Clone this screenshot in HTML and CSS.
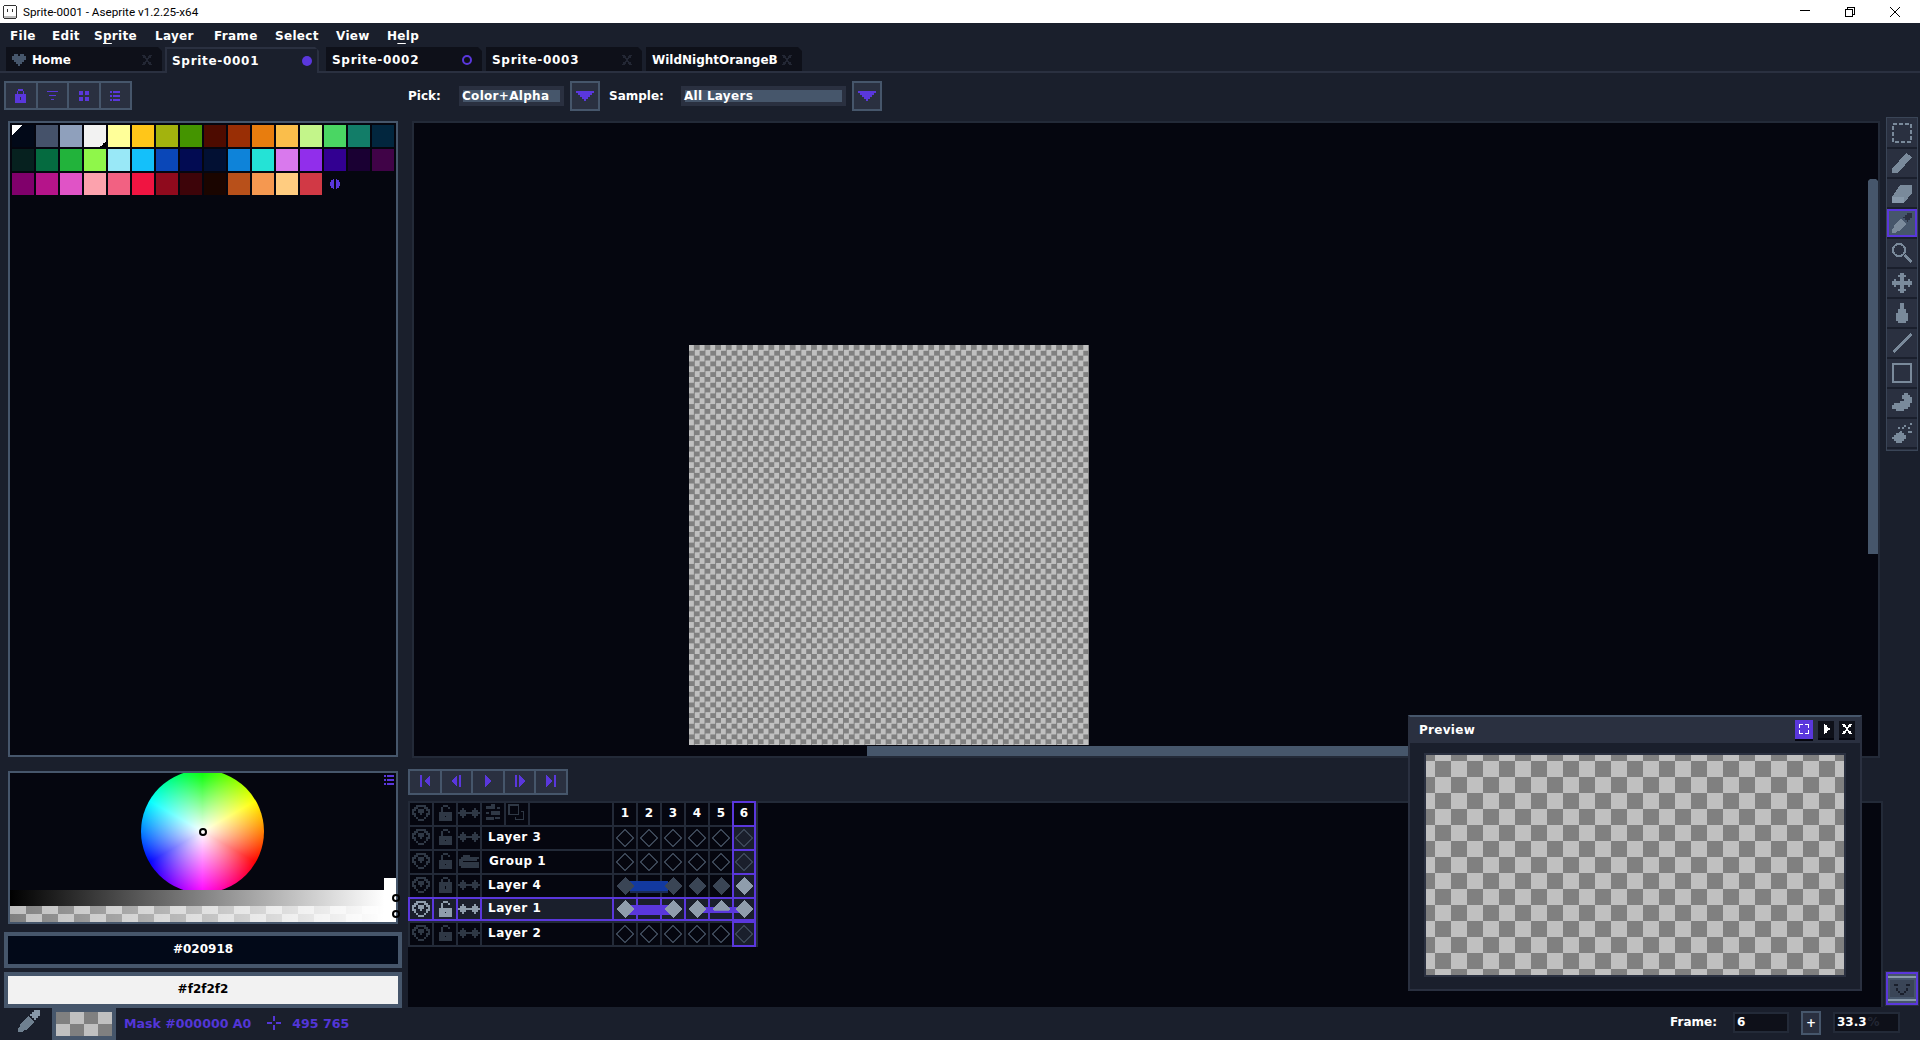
FILE: index.html
```html
<!DOCTYPE html>
<html lang="en">
<head>
    <meta charset="UTF-8">
    <title>Sprite-0001 - Aseprite v1.2.25-x64</title>
    <link rel="stylesheet" href="styles.css">
</head>
<body>
    <svg class="sprites">
        <symbol id="eye" viewBox="0 0 9 8"><path d="M2 0h5v1h-5z M1 1h2v1h-2z M6 1h2v1h-2z M0 2h2v1h-2z M3 2h3v1h-3z M7 2h2v1h-2z M0 3h1v1h-1z M3 3h3v1h-3z M8 3h1v1h-1z M0 4h2v1h-2z M4 4h1v1h-1z M7 4h2v1h-2z M1 5h1v1h-1z M7 5h1v1h-1z M2 6h1v1h-1z M6 6h1v1h-1z M3 7h3v1h-3z"/></symbol>
        <symbol id="lock" viewBox="0 0 7 9"><path fill-rule="evenodd" d="M2 0h3v1h1v2h1v6h-7v-6h1v-2h1z M2 1v2h3v-2z M3 5v2h1v-2z"/></symbol>
        <symbol id="unlock" viewBox="0 0 7 9"><path fill-rule="evenodd" d="M0 4h7v5h-7z M3 6v1h1v-1z M1 1h1v-1h3v1h1v1h-1v-1h-3v3h-1z"/></symbol>
        <symbol id="cont" viewBox="0 0 11 5"><path d="M2 0h1v1h1v1h3v-1h1v-1h1v1h1v1h1v1h-1v1h-1v1h-1v-1h-1v-1h-3v1h-1v1h-1v-1h-1v-1h-1v-1h1v-1h1z"/></symbol>
        <symbol id="dia-o" viewBox="0 0 9 9"><polygon points="4.5,.3 8.7,4.5 4.5,8.7 .3,4.5" fill="none" stroke="currentColor" stroke-width=".6"/></symbol>
        <symbol id="dia-f" viewBox="0 0 9 9"><polygon points="4.5,0 9,4.5 4.5,9 0,4.5"/></symbol>
        <symbol id="sliders" viewBox="0 0 11 11"><path d="M1 1h6v2h-6z M4 0h3v1h-3z M8 2h2v1h-2z M1 5h2v1h-2z M4 4h6v3h-6z M1 8h5v2h-5z M7 8h3v1h-3z"/></symbol>
        <symbol id="copies" viewBox="0 0 11 11"><path fill-rule="evenodd" d="M0 0h7v7h-7z M1 1v5h5v-5z M8 4h2v6h-6v-2h1v1h4v-4h-1z"/></symbol>
        <symbol id="folder" viewBox="0 0 11 8"><path d="M1 2h1v-1h4v1h5v1h-1v1h-8v4h-1v-1h-1v-4h1z M2 5h9v3h-9z"/></symbol>
        <symbol id="close" viewBox="0 0 7 7"><path d="M0 0h2v1h1v1h1v-1h1v-1h2v1h-1v1h-1v1h-1v1h1v1h1v1h1v1h-2v-1h-1v-1h-1v1h-1v1h-2v-1h1v-1h1v-1h1v-1h-1v-1h-1v-1h-1z"/></symbol>
        <symbol id="list" viewBox="0 0 10 10"><path d="M0 0h2v2h-2z M3 0h7v2h-7z M0 4h2v2h-2z M3 4h7v2h-7z M0 8h2v2h-2z M3 8h7v2h-7z"/></symbol>
        <symbol id="caret" viewBox="0 0 9 5"><path d="M0 0h9v1h-1v1h-1v1h-1v1h-1v1h-1v-1h-1v-1h-1v-1h-1v-1h-1z"/></symbol>
        <symbol id="dropper" viewBox="0 0 11 11"><path class="dropper-head" d="M7 1h1v-1h3v3h-1v1h-1v1h-1v-1h-1v-1h-1v-1h1z"/><path d="M5 3l3 3-4 4-1 0-1 1-2 0 0-2 1-1 0-1z"/></symbol>
    </svg>

    <header class="titlebar">
        <svg class="app-icon" viewBox="0 0 14 14"><rect x=".5" y=".5" width="13" height="13" rx="2" fill="#fff" stroke="#333"/><path d="M4 4h1v3h-1z M9 4h1v3h-1z" fill="#333"/><path d="M1 11h12v2h-12z" fill="#bbb"/></svg>
        <span class="title-text">Sprite-0001 - Aseprite v1.2.25-x64</span>
        <div class="window-controls">
            <svg class="win-min" viewBox="0 0 10 1"><path d="M0 0h10v1h-10z"/></svg>
            <svg class="win-restore" viewBox="0 0 10 10"><path fill="none" stroke="#000" d="M.5 2.500h7v7h-7z M2.500 2v-1.500h7v7h-1.500"/></svg>
            <svg class="win-close" viewBox="0 0 10 10"><path fill="none" stroke="#000" d="M0 0l10 10M10 0l-10 10"/></svg>
        </div>
    </header>

    <nav class="menubar">
        <span class="menu-file">File</span>
        <span class="menu-edit">Edit</span>
        <span class="menu-sprite">S<u>p</u>rite</span>
        <span class="menu-layer">Layer</span>
        <span class="menu-frame">Frame</span>
        <span class="menu-select">Select</span>
        <span class="menu-view">View</span>
        <span class="menu-help">H<u>e</u>lp</span>
    </nav>

    <div class="tabs">
        <div class="tab tab-home">
            <svg class="heart" viewBox="0 0 7 6"><path d="M1 0h2v1h1v-1h2v1h1v2h-1v1h-1v1h-1v1h-1v-1h-1v-1h-1v-1h-1v-2h1z"/></svg>
            <span class="tab-label">Home</span>
            <svg class="tab-x"><use href="#close"/></svg>
        </div>
        <div class="tab tab-active">
            <span class="tab-label">Sprite-0001</span>
            <span class="dot dot-full"></span>
        </div>
        <div class="tab">
            <span class="tab-label">Sprite-0002</span>
            <span class="dot dot-ring"></span>
        </div>
        <div class="tab">
            <span class="tab-label">Sprite-0003</span>
            <svg class="tab-x"><use href="#close"/></svg>
        </div>
        <div class="tab">
            <span class="tab-label tab-long">WildNightOrangeB</span>
            <svg class="tab-x"><use href="#close"/></svg>
        </div>
    </div>

    <div class="workspace">
        <aside class="sidebar">
            <div class="btn-group palette-tools">
                <button class="tool-btn"><svg class="ic-lock"><use href="#lock"/></svg></button>
                <button class="tool-btn"><svg class="ic-filter" viewBox="0 0 8 7"><path d="M0 0h8v1h-8z M1 3h6v1h-6z M3 6h2v1h-2z"/></svg></button>
                <button class="tool-btn"><svg class="ic-grid" viewBox="0 0 10 10"><path d="M0 0h4v4h-4z M6 0h4v4h-4z M0 6h4v4h-4z M6 6h4v4h-4z"/></svg></button>
                <button class="tool-btn"><svg class="ic-grid"><use href="#list"/></svg></button>
            </div>

            <div class="palette">
                <div class="swatches">
                    <i class="fg-mark" style="background-color:#020918"></i>
                    <i style="background:#45526a"></i>
                    <i style="background:#8fa0bc"></i>
                    <i class="bg-mark" style="background-color:#f2f2f2"></i>
                    <i style="background:#ffff99"></i>
                    <i style="background:#ffc619"></i>
                    <i style="background:#a3b30d"></i>
                    <i style="background:#449400"></i>
                    <i style="background:#4d0b00"></i>
                    <i style="background:#992e05"></i>
                    <i style="background:#e87d0e"></i>
                    <i style="background:#fabe4b"></i>
                    <i style="background:#c3f58a"></i>
                    <i style="background:#4ad663"></i>
                    <i style="background:#127d68"></i>
                    <i style="background:#02263e"></i>
                    <i style="background:#06211f"></i>
                    <i style="background:#056b40"></i>
                    <i style="background:#22b33b"></i>
                    <i style="background:#8ff74a"></i>
                    <i style="background:#99e8f7"></i>
                    <i style="background:#14c0fa"></i>
                    <i style="background:#0a47b8"></i>
                    <i style="background:#020b52"></i>
                    <i style="background:#021033"></i>
                    <i style="background:#0e83d9"></i>
                    <i style="background:#24e3d6"></i>
                    <i style="background:#d979ed"></i>
                    <i style="background:#912eeb"></i>
                    <i style="background:#320091"></i>
                    <i style="background:#1a0033"></i>
                    <i style="background:#400347"></i>
                    <i style="background:#80006b"></i>
                    <i style="background:#b5148a"></i>
                    <i style="background:#e053c6"></i>
                    <i style="background:#fca2ad"></i>
                    <i style="background:#f26182"></i>
                    <i style="background:#f01441"></i>
                    <i style="background:#8f0a1d"></i>
                    <i style="background:#3d0409"></i>
                    <i style="background:#1a0500"></i>
                    <i style="background:#b8501a"></i>
                    <i style="background:#f59850"></i>
                    <i style="background:#ffcc80"></i>
                    <i style="background:#d13945"></i>
                    <svg class="resize-mark" viewBox="0 0 10 10"><path d="M3 1h1v8h-1v-1h-1v-1h-1v-4h1v-1h1z M6 1h1v1h1v1h1v4h-1v1h-1v1h-1z"/></svg>
                </div>
            </div>

            <div class="color-panel">
                <div class="wheel-area">
                    <div class="wheel"><span class="ring"></span></div>
                    <svg class="wheel-menu"><use href="#list"/></svg>
                    <span class="white-thumb"></span>
                </div>
                <div class="value-bar"><span class="ring ring-end"></span></div>
                <div class="alpha-bar"><span class="ring ring-end"></span></div>
            </div>

            <div class="color-field fg-field">#020918</div>
            <div class="color-field bg-field">#f2f2f2</div>
        </aside>

        <main class="main">
            <div class="context-bar">
                <span class="ctx-label pick-label">Pick:</span>
                <div class="combo pick-combo"><span class="combo-value">Color+Alpha</span></div>
                <button class="drop-btn"><svg><use href="#caret"/></svg></button>
                <span class="ctx-label sample-label">Sample:</span>
                <div class="combo sample-combo"><span class="combo-value">All Layers</span></div>
                <button class="drop-btn"><svg><use href="#caret"/></svg></button>
            </div>

            <div class="editor-row">
                <section class="editor">
                    <div class="sprite-canvas"></div>
                    <span class="scroll-v"></span>
                    <span class="scroll-h"></span>
                </section>
                <div class="toolbar">
                    <button class="tool"><svg viewBox="0 0 10 10"><rect x=".5" y=".5" width="9" height="9" fill="none" stroke="currentColor" stroke-dasharray="2 1"/></svg></button>
                    <button class="tool"><svg viewBox="0 0 10 10"><polygon points="0,8 7,0 10,2 3,10 0,10"/></svg></button>
                    <button class="tool"><svg viewBox="0 0 10 10"><polygon points="0,7 4,1 10,1 10,5 6,10 0,10"/><polygon points="0,7 6,7 6,10 0,10" fill="#8899aa"/></svg></button>
                    <button class="tool tool-on"><svg><use href="#dropper"/></svg></button>
                    <button class="tool"><svg viewBox="0 0 10 10"><circle cx="3.500" cy="3.500" r="3" fill="none" stroke="currentColor"/><polygon points="5.500,6.500 6.500,5.500 10,9 9,10"/></svg></button>
                    <button class="tool"><svg viewBox="0 0 10 10"><path d="M4 0h2v1h1v1h-1v2h2v-1h1v1h1v2h-1v1h-1v-1h-2v2h1v1h-1v1h-2v-1h-1v-1h1v-2h-2v1h-1v-1h-1v-2h1v-1h1v1h2v-2h-1v-1h1z"/></svg></button>
                    <button class="tool"><svg viewBox="0 0 10 10"><path d="M4 0h2v3h1v2h1v4h-1v1h-4v-1h-1v-4h1v-2h1z"/></svg></button>
                    <button class="tool"><svg viewBox="0 0 10 10"><polygon points="0,9 9,0 10,1 1,10"/></svg></button>
                    <button class="tool"><svg viewBox="0 0 10 10"><rect x=".5" y=".5" width="9" height="9" fill="none" stroke="currentColor"/></svg></button>
                    <button class="tool"><svg viewBox="0 0 10 10"><path d="M6 0h2v1h1v1h1v3h-1v2h-1v1h-2v1h-4v-1h-2v-2h1v-1h3v-1h2v-1h-1v-2h1z"/></svg></button>
                    <button class="tool"><svg viewBox="0 0 10 10"><path d="M4 4h1v1h1v1h1v2h-1v1h-1v1h-3v-1h-1v-1h-1v-1h1v-1h1v-1h1z M6 1h1v1h-1z M9 0h1v1h-1z M8 2h1v1h-1z M5 2h1v1h-1z M8 4h2v1h-2z M3 2h1v1h-1z"/></svg></button>
                </div>
            </div>

            <div class="btn-group anim-buttons">
                <button class="anim-btn"><svg viewBox="0 0 5 6"><path d="M0 0h1v6h-1z M5 0v6l-3-3z"/></svg></button>
                <button class="anim-btn"><svg viewBox="0 0 5 6"><path d="M3 0v6l-3-3z M4 0h1v6h-1z"/></svg></button>
                <button class="anim-btn"><svg viewBox="0 0 5 6"><path d="M1 0l3 3-3 3z"/></svg></button>
                <button class="anim-btn"><svg viewBox="0 0 5 6"><path d="M0 0h1v6h-1z M2 0l3 3-3 3z"/></svg></button>
                <button class="anim-btn"><svg viewBox="0 0 5 6"><path d="M0 0l3 3-3 3z M4 0h1v6h-1z"/></svg></button>
            </div>

            <div class="timeline-row">
                <section class="timeline">
                    <div class="tl-grid">
                        <!-- header -->
                        <div class="c"><svg class="i-eye"><use href="#eye"/></svg></div>
                        <div class="c"><svg class="i-lock"><use href="#unlock"/></svg></div>
                        <div class="c"><svg class="i-cont"><use href="#cont"/></svg></div>
                        <div class="c"><svg class="i-big"><use href="#sliders"/></svg></div>
                        <div class="c"><svg class="i-big"><use href="#copies"/></svg></div>
                        <div class="c"></div>
                        <div class="c num">1</div><div class="c num">2</div><div class="c num">3</div><div class="c num">4</div><div class="c num">5</div><div class="c num cur">6</div>

                        <!-- Layer 3 -->
                        <div class="c"><svg class="i-eye"><use href="#eye"/></svg></div>
                        <div class="c"><svg class="i-lock"><use href="#unlock"/></svg></div>
                        <div class="c"><svg class="i-cont"><use href="#cont"/></svg></div>
                        <div class="c name">Layer 3</div>
                        <div class="c f"><svg><use href="#dia-o"/></svg></div><div class="c f"><svg><use href="#dia-o"/></svg></div><div class="c f"><svg><use href="#dia-o"/></svg></div><div class="c f"><svg><use href="#dia-o"/></svg></div><div class="c f"><svg><use href="#dia-o"/></svg></div><div class="c f cur"><svg><use href="#dia-o"/></svg></div>

                        <!-- Group 1 -->
                        <div class="c"><svg class="i-eye"><use href="#eye"/></svg></div>
                        <div class="c"><svg class="i-lock"><use href="#unlock"/></svg></div>
                        <div class="c"><svg class="i-folder"><use href="#folder"/></svg></div>
                        <div class="c name name-group">Group 1</div>
                        <div class="c f"><svg><use href="#dia-o"/></svg></div><div class="c f"><svg><use href="#dia-o"/></svg></div><div class="c f"><svg><use href="#dia-o"/></svg></div><div class="c f"><svg><use href="#dia-o"/></svg></div><div class="c f"><svg><use href="#dia-o"/></svg></div><div class="c f cur"><svg><use href="#dia-o"/></svg></div>

                        <!-- Layer 4 -->
                        <div class="c"><svg class="i-eye"><use href="#eye"/></svg></div>
                        <div class="c"><svg class="i-lock"><use href="#lock"/></svg></div>
                        <div class="c"><svg class="i-cont"><use href="#cont"/></svg></div>
                        <div class="c name">Layer 4</div>
                        <div class="c f dim"><svg><use href="#dia-f"/></svg><span class="tag tag-r"></span></div>
                        <div class="c f"><span class="tag tag-full"></span></div>
                        <div class="c f dim"><svg><use href="#dia-f"/></svg><span class="tag tag-l"></span></div>
                        <div class="c f dim"><svg><use href="#dia-f"/></svg></div>
                        <div class="c f dim"><svg><use href="#dia-f"/></svg></div>
                        <div class="c f cur lit"><svg><use href="#dia-f"/></svg></div>

                        <!-- Layer 1, the active one -->
                        <div class="c on"><svg class="i-eye"><use href="#eye"/></svg></div>
                        <div class="c on"><svg class="i-lock"><use href="#unlock"/></svg></div>
                        <div class="c on"><svg class="i-cont"><use href="#cont"/></svg></div>
                        <div class="c on name">Layer 1</div>
                        <div class="c f on lit"><svg><use href="#dia-f"/></svg><span class="bar bar-r"></span></div>
                        <div class="c f on"><span class="bar bar-full"></span></div>
                        <div class="c f on lit"><svg><use href="#dia-f"/></svg><span class="bar bar-l"></span></div>
                        <div class="c f on lit"><svg><use href="#dia-f"/></svg><span class="bar bar-thin-r"></span></div>
                        <div class="c f on lit"><svg class="half"><use href="#dia-f"/></svg><span class="bar bar-thin"></span></div>
                        <div class="c f on cur lit"><svg><use href="#dia-f"/></svg><span class="bar bar-thin-l"></span></div>

                        <!-- Layer 2 -->
                        <div class="c"><svg class="i-eye"><use href="#eye"/></svg></div>
                        <div class="c"><svg class="i-lock"><use href="#unlock"/></svg></div>
                        <div class="c"><svg class="i-cont"><use href="#cont"/></svg></div>
                        <div class="c name">Layer 2</div>
                        <div class="c f"><svg><use href="#dia-o"/></svg></div><div class="c f"><svg><use href="#dia-o"/></svg></div><div class="c f"><svg><use href="#dia-o"/></svg></div><div class="c f"><svg><use href="#dia-o"/></svg></div><div class="c f"><svg><use href="#dia-o"/></svg></div><div class="c f cur"><svg><use href="#dia-o"/></svg></div>
                    </div>
                </section>
                <button class="thumb-btn">
                    <svg viewBox="0 0 14 15"><rect width="14" height="15" fill="#46566b"/><path d="M0 1h14v1h-14z M0 13h14v1h-14z" fill="#8899aa"/><path d="M1 3h12v9h-12z" fill="#3a4557"/><path d="M3 5h2v1h-2z M9 5h2v1h-2z M4 7h1v2h1v1h2v-1h1v-2h1v2h-1v1h-1v1h-2v-1h-1v-1h-1z" fill="#1a1f2c"/></svg>
                </button>
            </div>
        </main>
    </div>

    <footer class="statusbar">
        <svg class="status-dropper"><use href="#dropper"/></svg>
        <div class="status-swatch"><div class="status-check"></div></div>
        <span class="status-text">Mask #000000 A0</span>
        <svg class="status-cross" viewBox="0 0 14 14"><path d="M6 0h2v5h-2z M6 9h2v5h-2z M0 6h5v2h-5z M9 6h5v2h-5z"/></svg>
        <span class="status-text status-pos">495 765</span>
        <span class="status-frame">Frame:</span>
        <div class="field field-frame">6</div>
        <button class="plus-btn">+</button>
        <div class="field field-zoom">33.3<span class="percent">%</span></div>
    </footer>

    <div class="preview">
        <div class="preview-head">
            <span class="preview-title">Preview</span>
            <button class="pv-btn pv-on"><svg viewBox="0 0 7 7"><path d="M0 0h3v1h-2v2h-1z M4 0h3v3h-1v-2h-2z M0 4h1v2h2v1h-3z M6 4h1v3h-3v-1h2z"/></svg></button>
            <button class="pv-btn"><svg viewBox="0 0 7 7"><path d="M2 0h1v1h1v1h1v1h1v1h-1v1h-1v1h-1v1h-1z"/></svg></button>
            <button class="pv-btn"><svg><use href="#close"/></svg></button>
        </div>
        <div class="preview-frame"><div class="preview-check"></div></div>
    </div>
</body>
</html>
```

FILE: styles.css
```css
* {
    box-sizing: border-box;
    margin: 0;
    padding: 0;
}

body {
    width: 1920px;
    height: 1040px;
    overflow: hidden;
    position: relative;
    display: flex;
    flex-direction: column;
    background: #1a1f2c;
    color: #fff;
    font-family: "DejaVu Sans", sans-serif;
    font-weight: bold;
    font-size: 12px;
}

svg {
    display: block;
    fill: currentColor;
    shape-rendering: crispEdges;
}

button {
    border: none;
    background: none;
    color: inherit;
    font: inherit;
}

.sprites {
    display: none;
}

.dropper-head {
    fill: var(--head);
}

/* window title */
.titlebar {
    height: 23px;
    background: #fff;
    color: #000;
    display: flex;
    align-items: center;
    padding-left: 3px;
    font-family: Roboto, sans-serif;
    font-weight: normal;
}

.app-icon {
    width: 14px;
    height: 14px;
}

.title-text {
    margin-left: 6px;
    font-size: 11.7px;
    white-space: nowrap;
}

.window-controls {
    margin-left: auto;
    display: flex;
    align-items: center;
    padding-right: 20px;
    gap: 35px;
}

.win-min {
    width: 10px;
    height: 1px;
    margin-top: -3px;
}

.win-restore,
.win-close {
    width: 10px;
    height: 10px;
}

.win-close {
    shape-rendering: auto;
}

/* menu */
.menubar {
    height: 24px;
    display: flex;
    align-items: center;
    padding: 1px 0 0 10px;
    letter-spacing: .3px;
}

.menubar u {
    text-underline-offset: 3px;
}

.menubar span {
    display: block;
}

.menu-file { width: 42px; }
.menu-edit { width: 42px; }
.menu-sprite { width: 61px; }
.menu-layer { width: 59px; }
.menu-frame { width: 61px; }
.menu-select { width: 61px; }
.menu-view { width: 51px; }

/* tabs */
.tabs {
    height: 26px;
    display: flex;
    padding-left: 6px;
    gap: 4px;
    border-bottom: 2px solid #2a3040;
}

.tab {
    width: 156px;
    height: 24px;
    background: #0e1019;
    display: flex;
    align-items: center;
    padding: 2px 10px 0 6px;
    clip-path: polygon(0 0, calc(100% - 4px) 0, 100% 4px, 100% 100%, 0 100%);
}

.tab-active {
    width: 154px;
    height: 26px;
    margin-right: 3px;
    margin-left: -1px;
    background: #1a1f2c;
    border-top: 2px solid #2a3040;
    box-shadow: inset 2px 0 #2a3040, inset -2px 0 #2a3040;
    padding: 0 7px;
}

.tab-label {
    white-space: nowrap;
    letter-spacing: .7px;
}

.tab-home .tab-label,
.tab-long {
    letter-spacing: 0;
}

.heart {
    width: 14px;
    height: 12px;
    color: #46566b;
    margin-right: 6px;
}

.tab-x {
    width: 10px;
    height: 10px;
    margin-left: auto;
    color: #232734;
}

.dot {
    width: 10px;
    height: 10px;
    margin-left: auto;
    border-radius: 50%;
}

.dot-full {
    background: #5a37dc;
}

.dot-ring {
    border: 2px solid #5a37dc;
}

/* layout below the tabs */
.workspace {
    height: 935px;
    display: grid;
    grid-template-columns: 408px 1fr;
}

.sidebar {
    padding-top: 8px;
    display: flex;
    flex-direction: column;
}

.btn-group {
    display: flex;
    background: #46566b;
    padding: 2px;
    gap: 2px;
}

.palette-tools {
    width: 128px;
    height: 29px;
    margin-left: 4px;
}

.tool-btn {
    flex: 1;
    background: #2a3040;
    color: #5a37dc;
    display: flex;
    align-items: center;
    justify-content: center;
}

.ic-lock {
    width: 13px;
    height: 14px;
}

.ic-filter {
    width: 11px;
    height: 9px;
}

.ic-grid {
    width: 10px;
    height: 10px;
}

.palette {
    margin: 11px 0 0 8px;
    width: 390px;
    height: 636px;
    background: #05060f;
    border: 2px solid #46566b;
    padding: 2px;
}

.swatches {
    display: grid;
    grid-template-columns: repeat(16, 22px);
    grid-auto-rows: 22px;
    gap: 2px;
}

.fg-mark {
    background-image: linear-gradient(135deg, #fff 50%, transparent 50%);
    background-size: 11px 11px;
    background-repeat: no-repeat;
}

.bg-mark {
    background-image: linear-gradient(135deg, transparent 50%, #000 50%);
    background-size: 6px 6px;
    background-position: right bottom;
    background-repeat: no-repeat;
}

.resize-mark {
    width: 12px;
    height: 12px;
    margin: 5px;
    color: #5a37dc;
}

/* colour wheel */
.color-panel {
    margin: 14px 0 0 8px;
    width: 390px;
    height: 153px;
    background: #05060f;
    border: 2px solid #46566b;
}

.wheel-area {
    height: 117px;
    position: relative;
    overflow: hidden;
    display: flex;
    justify-content: center;
    align-items: center;
    padding-right: 1px;
}

.wheel {
    width: 123px;
    height: 123px;
    flex: none;
    border-radius: 50%;
    background:
        radial-gradient(circle closest-side, #fff 0, rgba(255, 255, 255, 0) 100%),
        conic-gradient(#0f0, #ff0 60deg, #f00 120deg, #f0f 180deg, #00f 240deg, #0ff 300deg, #0f0);
    display: flex;
    align-items: center;
    justify-content: center;
}

.ring {
    width: 8px;
    height: 8px;
    border-radius: 50%;
    border: 2px solid #000;
    display: block;
}

.ring-end {
    position: absolute;
    right: -4px;
    top: 4px;
}

.wheel-menu {
    position: absolute;
    top: 2px;
    right: 2px;
    width: 10px;
    height: 10px;
    color: #5a37dc;
}

.white-thumb {
    position: absolute;
    right: 0;
    bottom: 0;
    width: 12px;
    height: 12px;
    background: #fff;
}

.value-bar {
    height: 16px;
    position: relative;
    background: linear-gradient(90deg, #000, #fff 97%);
}

.alpha-bar {
    height: 16px;
    position: relative;
    background:
        linear-gradient(90deg, rgba(255, 255, 255, 0), #fff 97%),
        conic-gradient(#808080 25%, #c0c0c0 0 50%, #808080 0 75%, #c0c0c0 0) 0 0 / 32px 16px;
}

.color-field {
    margin: 8px 6px 0 4px;
    height: 36px;
    border: 4px solid #46566b;
    padding-bottom: 2px;
    display: flex;
    align-items: center;
    justify-content: center;
}

.fg-field {
    background: #020918;
}

.bg-field {
    margin-top: 4px;
    background: #f2f2f2;
    color: #000;
}

/* context bar */
.main {
    min-width: 0;
    display: flex;
    flex-direction: column;
}

.context-bar {
    height: 30px;
    margin-top: 8px;
    display: flex;
    align-items: center;
}

.ctx-label {
    white-space: nowrap;
}

.pick-label {
    width: 51px;
}

.sample-label {
    width: 72px;
    margin-left: 9px;
}

.combo {
    height: 20px;
    background: #2a3040;
    padding: 4px;
}

.pick-combo {
    width: 105px;
}

.sample-combo {
    width: 165px;
}

.combo-value {
    display: block;
    height: 12px;
    line-height: 12px;
    background: #46566b;
    white-space: nowrap;
    text-indent: -1px;
    letter-spacing: .3px;
}

.drop-btn {
    width: 30px;
    height: 30px;
    margin-left: 6px;
    background: #2a3040;
    border: 2px solid #46566b;
    color: #5a37dc;
    display: flex;
    align-items: center;
    justify-content: center;
}

.drop-btn svg {
    width: 18px;
    height: 10px;
}

/* editor */
.editor-row {
    display: flex;
    margin-top: 10px;
    height: 637px;
}

.editor {
    margin-left: 4px;
    width: 1468px;
    height: 637px;
    background: #05060f;
    border: 2px solid #232a38;
    position: relative;
    overflow: hidden;
}

.sprite-canvas {
    width: 400px;
    height: 400px;
    margin: 222px 0 0 275px;
    background: conic-gradient(#808080 25%, #c0c0c0 0 50%, #808080 0 75%, #c0c0c0 0) 0 0 / 10.67px 10.67px;
}

.scroll-v {
    position: absolute;
    right: 0;
    top: 56px;
    width: 10px;
    height: 375px;
    background: #46566b;
    clip-path: polygon(2px 0, 8px 0, 100% 2px, 100% 100%, 0 100%, 0 2px);
}

.scroll-h {
    position: absolute;
    left: 453px;
    bottom: 0;
    width: 800px;
    height: 10px;
    background: #46566b;
}

.toolbar {
    width: 32px;
    height: 334px;
    margin: -4px 0 0 6px;
    background: #2a3040;
    padding: 2px 1px;
    display: flex;
    flex-direction: column;
    box-shadow: inset 0 0 0 1px #3a4557;
}

.tool {
    height: 30px;
    flex: none;
    background: #2a3040;
    color: #7a8a9b;
    border-bottom: 2px solid #1a1f2c;
    display: flex;
    align-items: center;
    justify-content: center;
}

.tool svg {
    width: 20px;
    height: 20px;
}

.tool-on {
    --head: #2a3040;
    background: #46566b;
    box-shadow: inset 0 0 0 2px #5a37dc;
}

/* animation buttons */
.anim-buttons {
    width: 160px;
    height: 26px;
    margin-top: 11px;
}

.anim-btn {
    flex: 1;
    background: #2a3040;
    color: #5a37dc;
    display: flex;
    align-items: center;
    justify-content: center;
    padding-bottom: 2px;
}

.anim-btn svg {
    width: 10px;
    height: 12px;
}

/* timeline */
.timeline-row {
    display: flex;
    margin-top: 6px;
    height: 206px;
}

.timeline {
    width: 1475px;
    background: #05060f;
    border: 2px solid #232a38;
    border-bottom: none;
    border-left: none;
}

.tl-grid {
    width: 350px;
    height: 146px;
    margin-top: -2px;
    padding: 2px 0 0 2px;
    background: #232a38;
    display: grid;
    grid-template-columns: repeat(5, 22px) 82px repeat(5, 22px) 20px;
    grid-auto-rows: 22px;
    gap: 2px;
}

.c {
    background: #05060f;
    color: #2f3845;
    display: flex;
    align-items: center;
    justify-content: center;
    position: relative;
    padding-bottom: 3px;
}

.i-eye {
    width: 18px;
    height: 16px;
}

.i-lock {
    width: 13px;
    height: 16px;
}

.i-cont {
    width: 22px;
    height: 10px;
}

.i-big {
    width: 18px;
    height: 18px;
}

.i-folder {
    width: 20px;
    height: 15px;
}

.num {
    color: #fff;
}

.name {
    grid-column: span 3;
    justify-content: flex-start;
    padding-left: 6px;
    color: #fff;
    letter-spacing: .5px;
}

.name-group {
    padding-left: 7px;
}

.f {
    color: #3a4555;
    padding-bottom: 1px;
}

.f svg {
    width: 18px;
    height: 18px;
    position: relative;
    z-index: 1;
}

.cur {
    background: #1a1f2c;
    box-shadow: 0 0 0 2px #5a37dc;
    z-index: 1;
}

.num.cur {
    background: #05060f;
}

.lit {
    color: #8f9dac;
}

.on {
    height: 20px;
    background: #1a1f2c;
    color: #8f9dac;
    box-shadow: 0 0 0 2px #5a37dc;
    padding-bottom: 0;
}

.name.on {
    color: #fff;
    padding-bottom: 2px;
}

.half {
    clip-path: inset(0 0 40% 0);
}

/* linked cels */
.tag,
.bar {
    position: absolute;
    display: block;
}

.tag {
    top: 6px;
    height: 10px;
    background: #1239a0;
    box-shadow: 0 2px #1a2c5a;
}

.tag-r { left: 16px; right: -2px; }
.tag-full { left: -2px; right: -2px; }
.tag-l { left: -2px; right: 16px; }

.bar {
    top: 6px;
    height: 10px;
    background: #5a37dc;
}

.bar-r { left: 12px; right: -2px; }
.bar-full { left: -2px; right: -2px; }
.bar-l { left: -2px; right: 12px; }

.bar-thin-r,
.bar-thin,
.bar-thin-l {
    top: 8px;
    height: 6px;
}

.bar-thin-r { left: 12px; right: -2px; }
.bar-thin { left: -2px; right: -2px; }
.bar-thin-l { left: -2px; right: 12px; }

.thumb-btn {
    width: 32px;
    height: 33px;
    margin: 171px 0 0 3px;
    border: 2px solid #5a37dc;
    box-shadow: 0 0 0 1px #2a3040;
}

.thumb-btn svg {
    width: 100%;
    height: 100%;
}

/* status bar */
.statusbar {
    height: 32px;
    display: flex;
    align-items: center;
}

.status-dropper {
    --head: #8899aa;
    width: 22px;
    height: 22px;
    margin: -6px 12px 0 18px;
    color: #6f8090;
}

.status-swatch {
    width: 64px;
    height: 32px;
    background: #46566b;
    padding: 4px;
}

.status-check {
    height: 24px;
    background: conic-gradient(#c0c0c0 25%, #808080 0 50%, #c0c0c0 0 75%, #808080 0) 0 0 / 28px 24px;
}

.status-text {
    color: #5336d8;
    margin: 0 0 2px 8px;
    white-space: nowrap;
    font-size: 12.6px;
}

.status-cross {
    width: 14px;
    height: 14px;
    margin: 0 0 2px 16px;
    color: #5336d8;
}

.status-pos {
    margin-left: 11px;
}

.status-frame {
    margin: 0 0 5px auto;
    white-space: nowrap;
}

.field {
    height: 21px;
    background: #0e1019;
    border: 2px solid #232a38;
    display: flex;
    align-items: center;
    padding: 0 0 2px 2px;
    margin-bottom: 3px;
}

.field-frame {
    width: 56px;
    margin-left: 16px;
}

.plus-btn {
    width: 20px;
    height: 24px;
    margin: 0 12px 3px;
    background: #2a3040;
    border: 2px solid #46566b;
}

.field-zoom {
    width: 67px;
    margin-right: 20px;
}

.percent {
    color: #232734;
    margin-left: 1px;
}

/* floating preview window */
.preview {
    position: absolute;
    left: 1408px;
    top: 715px;
    width: 454px;
    height: 276px;
    background: #1a1f2c;
    border: 2px solid #2a3040;
    border-top-color: #46566b;
    display: flex;
    flex-direction: column;
}

.preview-head {
    height: 26px;
    flex: none;
    background: #2a3040;
    display: flex;
    align-items: center;
    padding: 0 5px 0 9px;
    gap: 5px;
}

.preview-title {
    margin-right: auto;
    letter-spacing: .3px;
}

.pv-btn {
    width: 16px;
    height: 19px;
    background: #0e1019;
    border-bottom: 2px solid #05060f;
    display: flex;
    align-items: center;
    justify-content: center;
}

.pv-btn svg {
    width: 10px;
    height: 10px;
}

.pv-on {
    width: 18px;
    height: 21px;
    background: #5a37dc;
}

.preview-frame {
    margin: 10px 14px 0;
    width: 422px;
    height: 224px;
    border: 2px solid #2a3040;
}

.preview-check {
    width: 100%;
    height: 100%;
    background: conic-gradient(#c0c0c0 25%, #808080 0 50%, #c0c0c0 0 75%, #808080 0) 9px 6px / 32px 32px;
}
```
